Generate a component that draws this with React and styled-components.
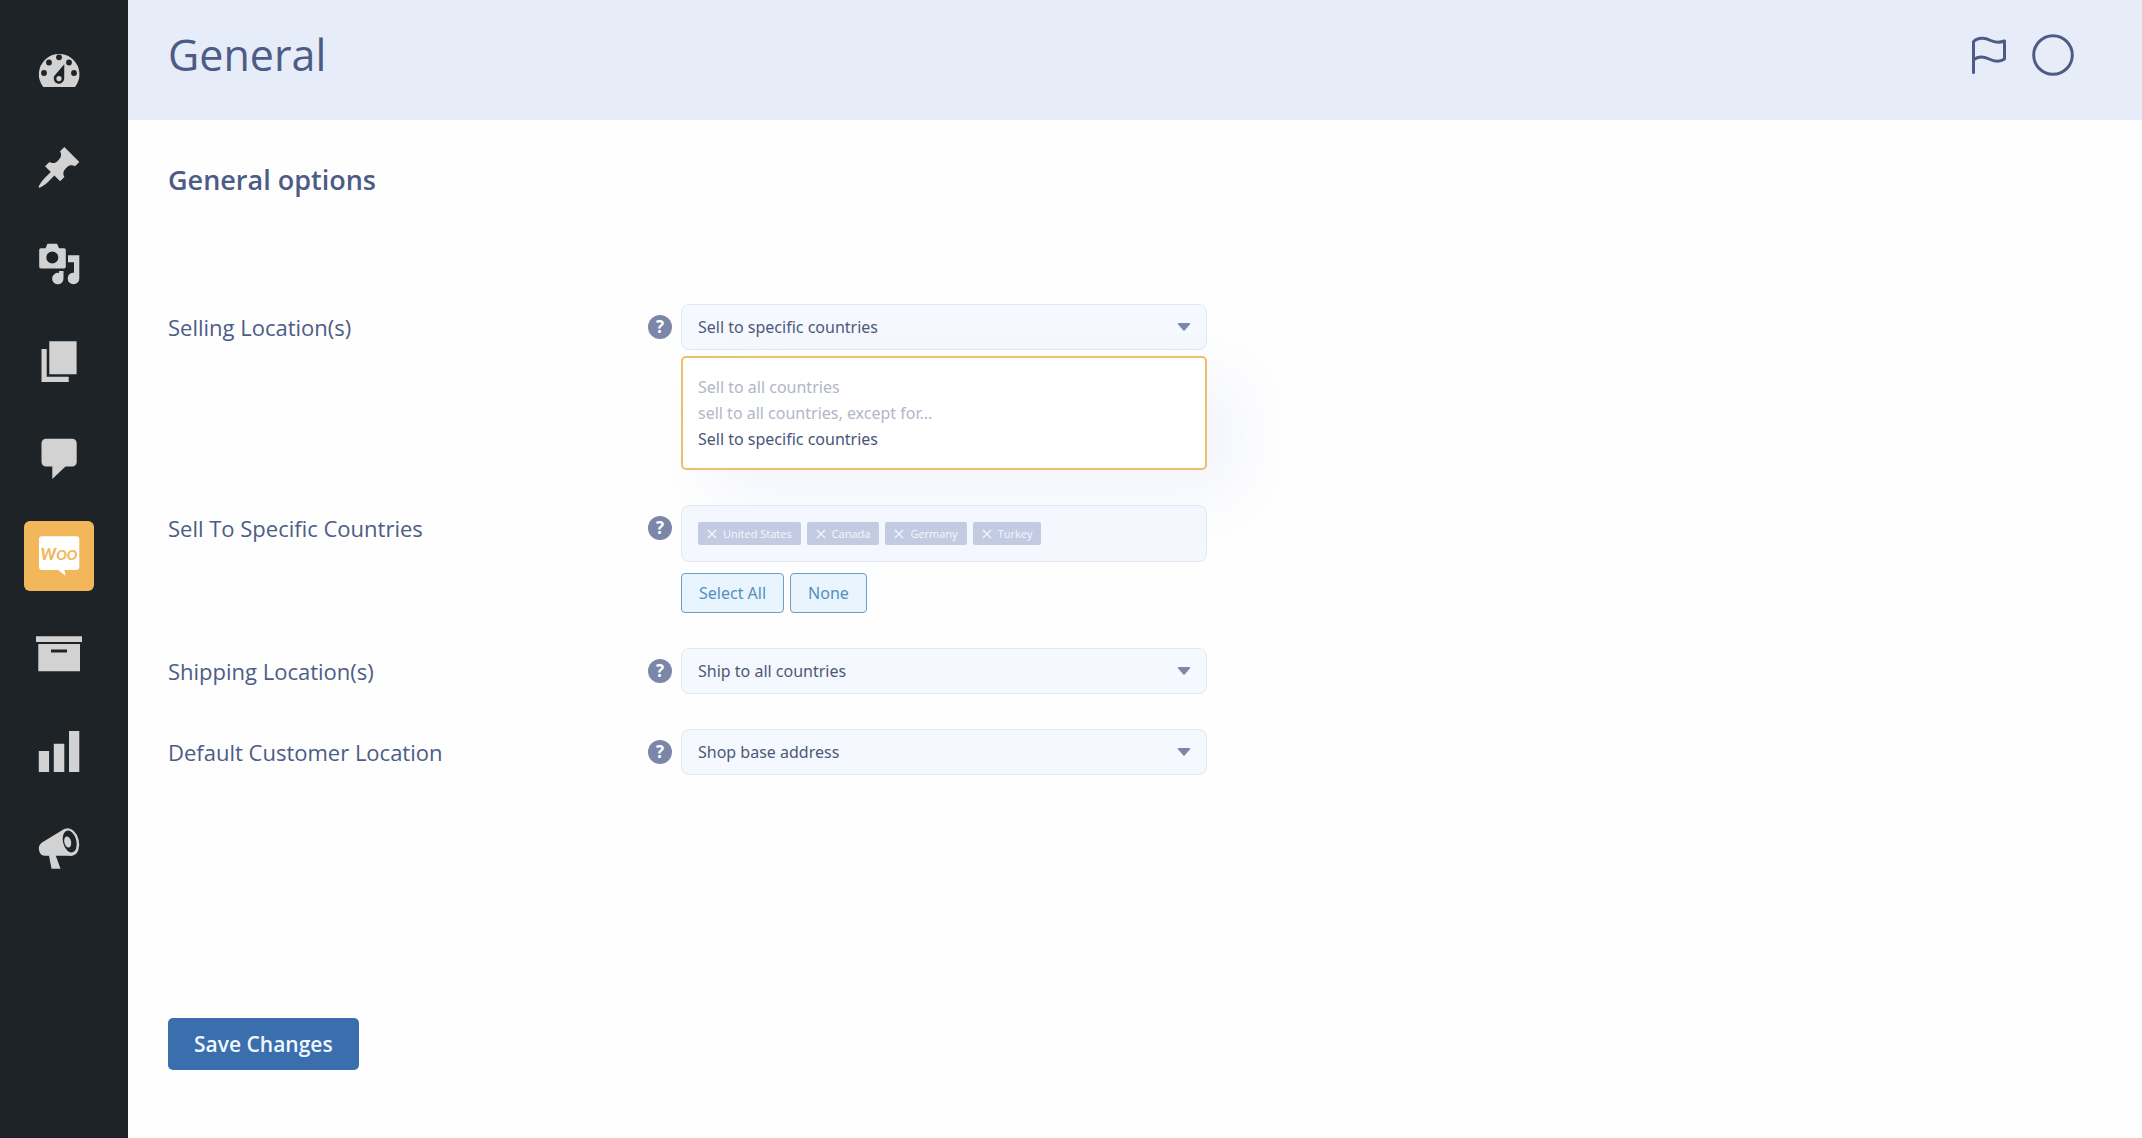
import React, { useState } from "react";
import styled, { createGlobalStyle } from "styled-components";

const Global = createGlobalStyle`
  *, *::before, *::after { box-sizing: border-box; }
  body {
    margin: 0;
    background: #fefefe;
    color: #4d5c86;
    font-family: "Open Sans", "Noto Sans", sans-serif;
  }
  button, select { font-family: inherit; }
`;

const controlFont = `"Noto Sans", "Open Sans", sans-serif`;

const Layout = styled.div`
  display: flex;
  min-height: 100vh;
`;

const Sidebar = styled.nav`
  flex: none;
  width: 128px;
  padding: 36px 24px;
  background: #1e2327;
`;

const NavList = styled.ul`
  display: flex;
  flex-direction: column;
  gap: 27px;
  margin: 0;
  padding: 0;
  list-style: none;
`;

const NavLink = styled.a`
  display: block;
  width: 70px;
  height: 70px;
  border-radius: 6px;
  color: #d2d2d2;
  background: ${(p) => (p.$active ? "#f2b75b" : "transparent")};

  svg { display: block; }
`;

const Page = styled.div`
  flex: 1;
  min-width: 0;
  display: flex;
  flex-direction: column;
`;

const Header = styled.header`
  display: flex;
  align-items: center;
  justify-content: space-between;
  height: 120px;
  padding: 0 68px 10px 40px;
  background: #e6ecf8;
`;

const Title = styled.h1`
  margin: 0;
  font-size: 43px;
  line-height: 60px;
  font-weight: 400;
`;

const HeaderActions = styled.div`
  display: flex;
  align-items: center;
  gap: 24px;
`;

const IconButton = styled.button`
  display: flex;
  padding: 0;
  border: 0;
  background: none;
  color: #4d5c86;
  cursor: pointer;
`;

const Form = styled.form`
  flex: 1;
  display: flex;
  flex-direction: column;
  align-items: flex-start;
  padding: 40px 40px 68px;
`;

const SectionTitle = styled.h2`
  margin: 0 0 104px;
  font-size: 27px;
  line-height: 40px;
  font-weight: 600;
`;

const Rows = styled.div`
  align-self: stretch;
  display: flex;
  flex-direction: column;
  gap: 35px;
`;

const Row = styled.div`
  display: grid;
  grid-template-columns: 480px 24px minmax(0, 535px);
  align-items: start;
`;

const Label = styled.label`
  font-size: 22px;
  line-height: 46px;
`;

const Help = styled.button`
  width: 24px;
  height: 24px;
  margin: 11px 0;
  padding: 0;
  border: 0;
  border-radius: 50%;
  background: #7b87a8;
  color: #fff;
  font-size: 17px;
  line-height: 24px;
  font-weight: 700;
  text-align: center;
`;

const Control = styled.div`
  display: flex;
  flex-direction: column;
  gap: ${(p) => p.$gap || 6}px;
  padding-left: 9px;
`;

const SelectWrap = styled.div`
  display: grid;
  align-items: center;

  select, svg { grid-area: 1 / 1; }
  svg { justify-self: end; margin-right: 16px; pointer-events: none; }
`;

const Select = styled.select`
  width: 100%;
  height: 46px;
  padding: 0 16px;
  appearance: none;
  border: 1px solid #e0e8f6;
  border-radius: 8px;
  background: #f5f8fe;
  color: #4d5878;
  font-family: ${controlFont};
  font-size: 16px;
`;

const Menu = styled.ul`
  margin: 0;
  padding: 16px 15px;
  list-style: none;
  border: 2px solid #eac06c;
  border-radius: 5px;
  background: #fff;
  box-shadow: 32px 24px 60px rgba(80, 110, 230, 0.07);
`;

const Option = styled.li`
  font-family: ${controlFont};
  font-size: 16px;
  line-height: 26px;
  color: ${(p) => (p.$selected ? "#4a5478" : "#b1b6c8")};
  cursor: pointer;
`;

const TagBox = styled.ul`
  display: flex;
  flex-wrap: wrap;
  gap: 6px;
  margin: 0;
  padding: 16px;
  list-style: none;
  border: 1px solid #e0e8f6;
  border-radius: 8px;
  background: #f4f7fd;
`;

const Tag = styled.li`
  display: flex;
  align-items: center;
  gap: 6px;
  height: 23px;
  padding: 0 9px;
  border-radius: 2px;
  background: #c3cbe3;
  color: #f4f7ff;
  font-size: 11px;
  line-height: 23px;
`;

const TagRemove = styled.button`
  display: flex;
  padding: 0;
  border: 0;
  background: none;
  color: inherit;
`;

const ButtonRow = styled.div`
  display: flex;
  gap: 6px;
`;

const SmallButton = styled.button`
  height: 40px;
  padding: 0 17px;
  border: 1px solid #6d9fc4;
  border-radius: 4px;
  background: #e8f4fe;
  color: #5590bb;
  font-family: ${controlFont};
  font-size: 16px;
`;

const SaveButton = styled.button`
  margin-top: auto;
  height: 52px;
  padding: 0 26px;
  border: 0;
  border-radius: 5px;
  background: #3a6eac;
  color: #f0f8ff;
  font-size: 21px;
  font-weight: 600;
`;

const DARK = "#1e2327";

const icons = {
  Dashboard: (
    <>
      <path d="M19.3 51A20.3 20.3 0 1 1 51 51Z" fill="currentColor" />
      <g fill={DARK}>
        <circle cx="20" cy="37" r="2.9" />
        <circle cx="25" cy="26.5" r="2.9" />
        <circle cx="35" cy="21.3" r="2.9" />
        <circle cx="45" cy="26.5" r="2.9" />
        <circle cx="50" cy="37" r="2.9" />
        <path d="M40.3 28.3L40.2 43a5.3 5.3 0 1 1-10-3Z" />
      </g>
      <circle cx="35" cy="42.6" r="2.6" fill="currentColor" />
    </>
  ),
  Posts: (
    <path
      transform="translate(11.4 11.2) scale(2.36)"
      fill="currentColor"
      d="M10.44 3.02l1.82-1.82 6.36 6.35-1.83 1.82c-1.05-.68-2.48-.57-3.41.36l-.75.75c-.92.93-1.04 2.35-.35 3.41l-1.83 1.82-2.41-2.41-2.8 2.79c-.42.42-3.38 2.71-3.8 2.29s1.86-3.39 2.28-3.81l2.79-2.79L4.1 9.36l1.83-1.82c1.05.69 2.48.57 3.4-.36l.75-.75c.93-.92 1.05-2.35.36-3.41z"
    />
  ),
  Media: (
    <g fill="currentColor">
      <path
        fillRule="evenodd"
        d="M17 18.3h4.5l2-4.5h9.5l2 4.5h5a1.8 1.8 0 0 1 1.8 1.8v16.6a1.8 1.8 0 0 1-1.8 1.8H17a1.8 1.8 0 0 1-1.8-1.8V20.1a1.8 1.8 0 0 1 1.8-1.8ZM28.3 21.5a6 6 0 1 0 0 12a6 6 0 0 0 0-12Z"
      />
      <path d="M39.5 41v7.5a5.7 5.7 0 1 1-4.5-5.5V41Z" />
      <path d="M44 25.3h11.3v23a5.8 5.8 0 1 1-5.3-5.6V32.3h-6Z" />
    </g>
  ),
  Pages: (
    <path
      fill="currentColor"
      d="M25.3 14.3h27.3v33H25.3ZM17.5 22h5.2v27.8h22V55H17.5Z"
    />
  ),
  Comments: (
    <path
      fill="currentColor"
      d="M22 14.7h26.2a4.5 4.5 0 0 1 4.5 4.5V38a4.5 4.5 0 0 1-4.5 4.5H41.5L28.3 55V42.5H22a4.5 4.5 0 0 1-4.5-4.5V19.2a4.5 4.5 0 0 1 4.5-4.5Z"
    />
  ),
  WooCommerce: (
    <>
      <path
        fill="#fff"
        d="M18 15.3h34.3a3 3 0 0 1 3 3V46a3 3 0 0 1-3 3H40.5l1 5.7L34 49H18a3 3 0 0 1-3-3V18.3a3 3 0 0 1 3-3Z"
      />
      <text
        x="35"
        y="39"
        textAnchor="middle"
        fontFamily="Lato, sans-serif"
        fontWeight="900"
        fontStyle="italic"
        fontSize="16"
        fill="#f2b75b"
      >
        W<tspan fontSize="14">OO</tspan>
      </text>
    </>
  ),
  Products: (
    <path
      fill="currentColor"
      fillRule="evenodd"
      d="M12 18.3h46v5.7H12ZM14.3 26h41.7v27.2H14.3ZM27 31.5v3h16v-3Z"
    />
  ),
  Analytics: (
    <path
      fill="currentColor"
      d="M14.8 36h10.3v21H14.8ZM29.8 28.7h10.5V57H29.8ZM45 16h10.3v41H45Z"
    />
  ),
  Marketing: (
    <>
      <path fill="currentColor" d="M41 16.6L18 30.5c-3 2-3.8 5-2.8 8.500c1 3.500 3 4.700 6 4.700h27Z" />
      <path fill="currentColor" d="M24.700 42h6.500l5.300 14.700H27.500Z" />
      <ellipse cx="45.6" cy="30" rx="9.3" ry="14" transform="rotate(-14 45.6 30)" fill="currentColor" />
      <ellipse cx="45.7" cy="29.5" rx="6.7" ry="11.2" transform="rotate(-14 45.7 29.5)" fill={DARK} />
      <ellipse cx="43.7" cy="30" rx="3.4" ry="5.6" transform="rotate(-14 43.7 30)" fill="currentColor" />
    </>
  ),
};

const selects = {
  selling: ["Sell to all countries", "sell to all countries, except for...", "Sell to specific countries"],
  shipping: ["Ship to all countries", "Ship to specific countries only"],
  customer: ["Shop base address", "No location by default", "Geolocate"],
};

function Dropdown({ id, options, value, onChange }) {
  return (
    <SelectWrap>
      <Select id={id} value={value} onChange={(e) => onChange(e.target.value)}>
        {options.map((o) => (
          <option key={o}>{o}</option>
        ))}
      </Select>
      <svg width="14" height="8" viewBox="0 0 14 8" aria-hidden="true">
        <path d="M1.5 0h11a.8.8 0 0 1 .6 1.3L7.6 7.4a.8.8 0 0 1-1.2 0L.9 1.3A.8.8 0 0 1 1.5 0Z" fill="#7b87ab" />
      </svg>
    </SelectWrap>
  );
}

function Field({ id, label, gap, children }) {
  return (
    <Row>
      <Label htmlFor={id} id={`${id}-label`}>{label}</Label>
      <Help type="button" aria-label={`Help: ${label}`}>?</Help>
      <Control $gap={gap}>{children}</Control>
    </Row>
  );
}

export default function App() {
  const [selling, setSelling] = useState(selects.selling[2]);
  const [shipping, setShipping] = useState(selects.shipping[0]);
  const [customer, setCustomer] = useState(selects.customer[0]);
  const [countries, setCountries] = useState(["United States", "Canada", "Germany", "Turkey"]);

  return (
    <>
      <Global />
      <Layout>
        <Sidebar aria-label="Admin">
          <NavList>
            {Object.entries(icons).map(([name, art]) => (
              <li key={name}>
                <NavLink href="#" aria-label={name} $active={name === "WooCommerce"}>
                  <svg width="70" height="70" viewBox="0 0 70 70" aria-hidden="true">{art}</svg>
                </NavLink>
              </li>
            ))}
          </NavList>
        </Sidebar>
        <Page>
          <Header>
            <Title>General</Title>
            <HeaderActions>
              <IconButton type="button" aria-label="Activity">
                <svg width="38" height="42" viewBox="0 0 38 42" fill="none" stroke="currentColor" strokeWidth="3" strokeLinecap="round" strokeLinejoin="round">
                  <path d="M3.5 38.5V7.5C8 3.5 15 3.5 20 6.2C25 8.8 30 8.5 34.5 7V25C30 28 24 27.5 19 25C14 22.5 8 22 3.5 26" />
                </svg>
              </IconButton>
              <IconButton type="button" aria-label="Finish setup">
                <svg width="42" height="42" viewBox="0 0 42 42" fill="none" stroke="currentColor" strokeWidth="3">
                  <circle cx="21" cy="21" r="19.3" />
                </svg>
              </IconButton>
            </HeaderActions>
          </Header>
          <Form onSubmit={(e) => e.preventDefault()}>
            <SectionTitle>General options</SectionTitle>
            <Rows>
              <Field id="selling" label="Selling Location(s)">
                <Dropdown id="selling" options={selects.selling} value={selling} onChange={setSelling} />
                <Menu role="listbox" aria-labelledby="selling-label">
                  {selects.selling.map((o) => (
                    <Option key={o} role="option" aria-selected={o === selling} $selected={o === selling} onClick={() => setSelling(o)}>
                      {o}
                    </Option>
                  ))}
                </Menu>
              </Field>
              <Field id="countries" label="Sell To Specific Countries" gap={11}>
                <TagBox id="countries" aria-labelledby="countries-label">
                  {countries.map((c) => (
                    <Tag key={c}>
                      <TagRemove type="button" aria-label={`Remove ${c}`} onClick={() => setCountries(countries.filter((x) => x !== c))}>
                        <svg width="10" height="10" viewBox="0 0 10 10" stroke="currentColor" strokeWidth="1.2">
                          <path d="M1 1l8 8M9 1l-8 8" />
                        </svg>
                      </TagRemove>
                      {c}
                    </Tag>
                  ))}
                </TagBox>
                <ButtonRow>
                  <SmallButton type="button">Select All</SmallButton>
                  <SmallButton type="button" onClick={() => setCountries([])}>None</SmallButton>
                </ButtonRow>
              </Field>
              <Field id="shipping" label="Shipping Location(s)">
                <Dropdown id="shipping" options={selects.shipping} value={shipping} onChange={setShipping} />
              </Field>
              <Field id="customer" label="Default Customer Location">
                <Dropdown id="customer" options={selects.customer} value={customer} onChange={setCustomer} />
              </Field>
            </Rows>
            <SaveButton type="submit">Save Changes</SaveButton>
          </Form>
        </Page>
      </Layout>
    </>
  );
}
